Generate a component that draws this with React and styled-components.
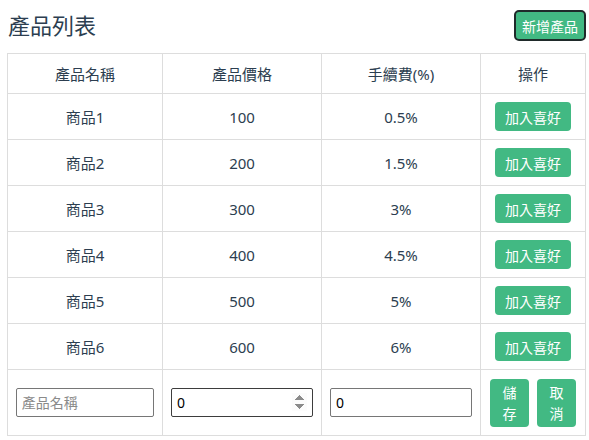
import React, { useState } from 'react';
import styled, { createGlobalStyle } from 'styled-components';

const GlobalStyle = createGlobalStyle`
  body {
    margin: 0;
    background: #fff;
    font-family: 'Noto Sans', 'Noto Sans CJK TC', sans-serif;
    color: #2c3e50;
  }
`;

const products = [
  { name: '商品1', price: 100, fee: '0.5%' },
  { name: '商品2', price: 200, fee: '1.5%' },
  { name: '商品3', price: 300, fee: '3%' },
  { name: '商品4', price: 400, fee: '4.5%' },
  { name: '商品5', price: 500, fee: '5%' },
  { name: '商品6', price: 600, fee: '6%' },
];

export default function App() {
  const [name, setName] = useState('');
  const [price, setPrice] = useState(0);
  const [fee, setFee] = useState(0);
  return (
    <Page>
      <GlobalStyle />
      <Header>
        <Title>產品列表</Title>
        <AddButton>新增產品</AddButton>
      </Header>
      <Table>
        <colgroup>
          <col style={{ width: 155 }} />
          <col style={{ width: 159 }} />
          <col style={{ width: 159 }} />
          <col style={{ width: 105 }} />
        </colgroup>
        <thead>
          <tr>
            <Th>產品名稱</Th>
            <Th>產品價格</Th>
            <Th>手續費(%)</Th>
            <Th>操作</Th>
          </tr>
        </thead>
        <tbody>
          {products.map((p) => (
            <tr key={p.name}>
              <Td>{p.name}</Td>
              <Td>{p.price}</Td>
              <Td>{p.fee}</Td>
              <Td>
                <GreenButton>加入喜好</GreenButton>
              </Td>
            </tr>
          ))}
          <tr>
            <Td tall>
              <Field
                type='text'
                placeholder='產品名稱'
                value={name}
                onChange={(e) => setName(e.target.value)}
              />
            </Td>
            <Td tall>
              <Field
                type='number'
                dark
                value={price}
                onChange={(e) => setPrice(e.target.value)}
              />
            </Td>
            <Td tall>
              <Field
                type='text'
                value={fee}
                onChange={(e) => setFee(e.target.value)}
              />
            </Td>
            <Td tall>
              <Actions>
                <SmallButton>儲存</SmallButton>
                <SmallButton>取消</SmallButton>
              </Actions>
            </Td>
          </tr>
        </tbody>
      </Table>
    </Page>
  );
}

const Page = styled.div`
  padding: 10px 3px 0 7px;
`;

const Header = styled.div`
  display: flex;
  justify-content: space-between;
  align-items: center;
  padding-left: 1px;
  margin-bottom: 12px;
`;

const Title = styled.h1`
  margin: 0;
  font-size: 22px;
  font-weight: 400;
  line-height: 31px;
  color: #2c3e50;
`;

const AddButton = styled.button`
  height: 31px;
  padding: 0 6px;
  font-family: inherit;
  font-size: 14px;
  color: #fff;
  background: #42b983;
  border: 2px solid #1f2a2a;
  border-radius: 5px;
`;

const Table = styled.table`
  width: 579px;
  border-collapse: collapse;
  table-layout: fixed;
  font-size: 15px;
`;

const Th = styled.th`
  height: 39px;
  padding: 0;
  font-weight: 400;
  text-align: center;
  border: 1px solid #ddd;
`;

const Td = styled.td`
  height: ${(p) => (p.tall ? '65px' : '45px')};
  padding: 0;
  text-align: center;
  border: 1px solid #ddd;
`;

const GreenButton = styled.button`
  height: 29px;
  padding: 0 10px;
  font-family: inherit;
  font-size: 14px;
  color: #fff;
  background: #42b983;
  border: none;
  border-radius: 4px;
`;

const Field = styled.input`
  box-sizing: border-box;
  width: 90%;
  height: 29px;
  padding: 0 5px;
  font-family: inherit;
  font-size: 14px;
  color: #000;
  border: 1px solid ${(p) => (p.dark ? '#3d3d3d' : '#767676')};
  border-radius: 2px;
  &::placeholder {
    color: #8a8a8a;
  }
  &::-webkit-inner-spin-button {
    opacity: 1;
  }
`;

const Actions = styled.div`
  display: flex;
  justify-content: center;
  gap: 8px;
`;

const SmallButton = styled.button`
  width: 39px;
  height: 48px;
  padding: 3px 9px;
  font-family: inherit;
  font-size: 14px;
  line-height: 21px;
  color: #fff;
  background: #42b983;
  border: none;
  border-radius: 4px;
`;
